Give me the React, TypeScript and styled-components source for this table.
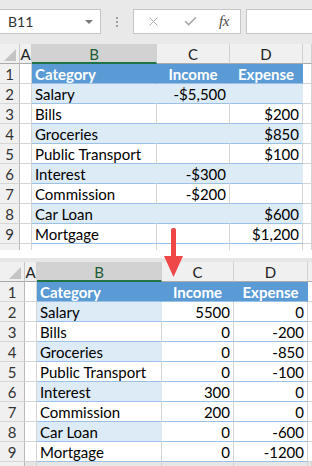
import styled, { createGlobalStyle } from 'styled-components';
import { X, Check } from 'lucide-react';

const GlobalStyle = createGlobalStyle`
  html, body {
    margin: 0;
    padding: 0;
    background: #ffffff;
    font-family: Lato, "Noto Sans", sans-serif;
  }
`;

interface Widths {
  head: number;
  a: number;
  b: number;
  c: number;
  d: number;
}

interface SheetProps {
  widths: Widths;
  rows: string[][];
  bandWholeRow: boolean;
  tail: number;
  gap: number;
}

const Page = styled.div`
  position: relative;
  width: 312px;
  height: 466px;
  overflow: hidden;
  display: flex;
  flex-direction: column;
`;

const FormulaBar = styled.div`
  height: 44px;
  background: #e9e9e9;
  display: flex;
  align-items: flex-start;
  padding-top: 9px;
  box-sizing: border-box;
`;

const NameBox = styled.div`
  width: 101px;
  height: 25px;
  box-sizing: border-box;
  background: #fff;
  border: 1px solid #c6c6c6;
  border-left: none;
  display: flex;
  align-items: center;
  justify-content: space-between;
  padding: 0 7px 0 8px;
  font-size: 14px;
  color: #333;
`;

const Caret = styled.span`
  width: 0;
  height: 0;
  border-left: 4px solid transparent;
  border-right: 4px solid transparent;
  border-top: 4px solid #7a7a7a;
`;

const Grip = styled.div`
  width: 32px;
  height: 25px;
  display: flex;
  flex-direction: column;
  align-items: center;
  justify-content: center;
  gap: 2px;
  span {
    width: 2px;
    height: 2px;
    background: #a0a0a0;
  }
`;

const FxButtons = styled.div`
  width: 108px;
  height: 25px;
  box-sizing: border-box;
  background: #fff;
  border: 1px solid #c6c6c6;
  display: grid;
  grid-template-columns: 38px 36px 1fr;
  align-items: center;
  justify-items: center;
  color: #a8a8a8;
`;

const Fx = styled.span`
  font-family: "Liberation Serif", serif;
  font-style: italic;
  font-size: 15px;
  color: #4a4a4a;
  letter-spacing: -0.5px;
`;

const FormulaInput = styled.div`
  flex: 1;
  margin-left: 5px;
  height: 25px;
  box-sizing: border-box;
  background: #fff;
  border: 1px solid #c6c6c6;
  border-right: none;
`;

const SheetWrap = styled.div<{ $gap: number }>`
  padding-top: ${(p) => p.$gap}px;
  background: ${(p) => (p.$gap ? '#e6e6e6' : 'transparent')};
`;

const Grid = styled.div<{ $cols: string }>`
  display: grid;
  grid-template-columns: ${(p) => p.$cols};
  grid-auto-rows: 20px;
  background: #fff;
`;

const Corner = styled.div`
  position: relative;
  background: #f0f0f0;
  border-right: 1px solid #c8c8c8;
  border-bottom: 1px solid #ababab;
  box-sizing: border-box;
  svg {
    position: absolute;
    right: 3px;
    bottom: 2px;
  }
`;

const ColHead = styled.div<{ $selected?: boolean }>`
  box-sizing: border-box;
  background: ${(p) => (p.$selected ? '#d2d2d2' : '#f0f0f0')};
  border-right: 1px solid #d0d0d0;
  border-bottom: ${(p) => (p.$selected ? '2px solid #217346' : '1px solid #ababab')};
  color: ${(p) => (p.$selected ? '#1d5b38' : '#222')};
  font-size: 15px;
  display: flex;
  align-items: center;
  justify-content: center;
  padding-top: ${(p) => (p.$selected ? 1 : 0)}px;
`;

const RowHead = styled.div`
  box-sizing: border-box;
  background: #f0f0f0;
  border-right: 1px solid #b9b9b9;
  border-bottom: 1px solid #d6d6d6;
  color: #333;
  font-size: 15px;
  display: flex;
  align-items: center;
  justify-content: center;
`;

const Cell = styled.div<{
  $fill?: string;
  $align?: 'left' | 'right' | 'center';
  $bold?: boolean;
  $line?: string;
}>`
  box-sizing: border-box;
  background: ${(p) => p.$fill || '#fff'};
  border-right: 1px solid ${(p) => (p.$fill ? p.$fill : '#d4d4d4')};
  border-bottom: 1px solid ${(p) => p.$line || '#d4d4d4'};
  color: ${(p) => (p.$bold ? '#fff' : '#000')};
  font-weight: ${(p) => (p.$bold ? 700 : 400)};
  font-size: 15px;
  white-space: nowrap;
  overflow: hidden;
  display: flex;
  align-items: center;
  justify-content: ${(p) => (p.$align === 'right' ? 'flex-end' : p.$align === 'center' ? 'center' : 'flex-start')};
  padding: 0 3px 0 3px;
`;

const Tail = styled.div<{ $h: number; $cols: string }>`
  display: grid;
  grid-template-columns: ${(p) => p.$cols};
  height: ${(p) => p.$h}px;
  div {
    border-right: 1px solid #d4d4d4;
  }
  div:first-child {
    background: #f0f0f0;
    border-right-color: #b9b9b9;
  }
`;

const Spacer = styled.div`
  height: 8px;
  background: #fff;
`;

const Arrow = styled.svg`
  position: absolute;
  left: 164px;
  top: 228px;
`;

const BLUE = '#5b9bd5';
const BAND = '#ddebf7';
const RULE = '#9bc2e6';

const Sheet = ({ widths, rows, bandWholeRow, tail, gap }: SheetProps) => {
  const cols = `${widths.head}px ${widths.a}px ${widths.b}px ${widths.c}px ${widths.d}px 1fr`;
  return (
    <SheetWrap $gap={gap}>
      <Grid $cols={cols}>
        <Corner>
          <svg width="12" height="12" viewBox="0 0 12 12">
            <polygon points="12,0 12,12 0,12" fill="#c4c4c4" />
          </svg>
        </Corner>
        <ColHead>A</ColHead>
        <ColHead $selected>B</ColHead>
        <ColHead>C</ColHead>
        <ColHead>D</ColHead>
        <ColHead />

        <RowHead>1</RowHead>
        <Cell />
        <Cell $fill={BLUE} $bold $line={RULE}>Category</Cell>
        <Cell $fill={BLUE} $bold $align="center" $line={RULE}>Income</Cell>
        <Cell $fill={BLUE} $bold $align="center" $line={RULE}>Expense</Cell>
        <Cell />

        {rows.map((r, i) => {
          const banded = i % 2 === 0;
          return [
            <RowHead key={`h${i}`}>{i + 2}</RowHead>,
            <Cell key={`a${i}`} />,
            <Cell key={`b${i}`} $fill={banded ? BAND : undefined} $line={RULE}>{r[0]}</Cell>,
            <Cell key={`c${i}`} $fill={banded && bandWholeRow ? BAND : undefined} $line={RULE} $align="right">{r[1]}</Cell>,
            <Cell key={`d${i}`} $fill={banded && bandWholeRow ? BAND : undefined} $line={RULE} $align="right">{r[2]}</Cell>,
            <Cell key={`e${i}`} />,
          ];
        })}
      </Grid>
      {tail > 0 && (
        <Tail $h={tail} $cols={cols}>
          <div />
          <div />
          <div />
          <div />
          <div />
          <div />
        </Tail>
      )}
    </SheetWrap>
  );
};

const beforeRows = [
  ['Salary', '-$5,500', ''],
  ['Bills', '', '$200'],
  ['Groceries', '', '$850'],
  ['Public Transport', '', '$100'],
  ['Interest', '-$300', ''],
  ['Commission', '-$200', ''],
  ['Car Loan', '', '$600'],
  ['Mortgage', '', '$1,200'],
];

const afterRows = [
  ['Salary', '5500', '0'],
  ['Bills', '0', '-200'],
  ['Groceries', '0', '-850'],
  ['Public Transport', '0', '-100'],
  ['Interest', '300', '0'],
  ['Commission', '200', '0'],
  ['Car Loan', '0', '-600'],
  ['Mortgage', '0', '-1200'],
];

export default function App() {
  return (
    <Page>
      <GlobalStyle />
      <FormulaBar>
        <NameBox>
          <span>B11</span>
          <Caret />
        </NameBox>
        <Grip>
          <span />
          <span />
          <span />
        </Grip>
        <FxButtons>
          <X size={15} strokeWidth={1.5} />
          <Check size={15} strokeWidth={2.5} />
          <Fx>fx</Fx>
        </FxButtons>
        <FormulaInput />
      </FormulaBar>
      <Sheet
        widths={{ head: 20, a: 12, b: 125, c: 73, d: 73 }}
        rows={beforeRows}
        bandWholeRow
        tail={6}
        gap={0}
      />
      <Spacer />
      <Sheet
        widths={{ head: 25, a: 12, b: 125, c: 72, d: 74 }}
        rows={afterRows}
        bandWholeRow={false}
        tail={4}
        gap={4}
      />
      <Arrow width="20" height="50" viewBox="0 0 20 50">
        <rect x="7" y="0" width="5" height="30" rx="2" fill="#ef4747" />
        <polygon points="0,28 19,28 9.5,49" fill="#ef4747" />
      </Arrow>
    </Page>
  );
}
